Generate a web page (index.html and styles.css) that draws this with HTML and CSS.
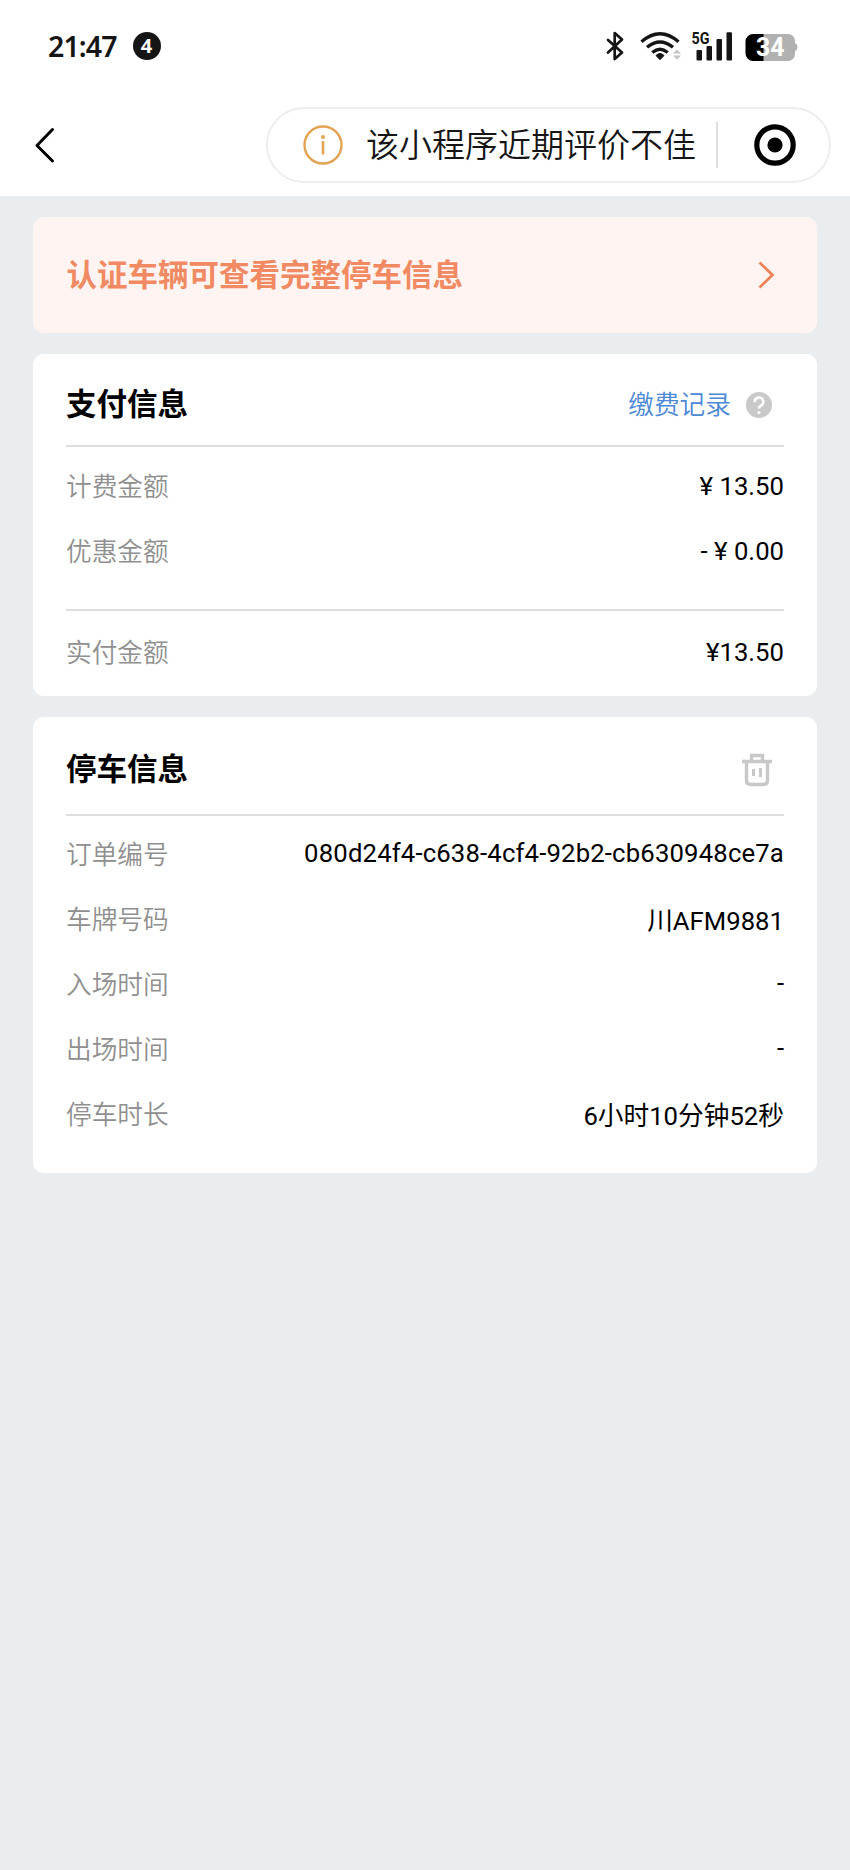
FILE: index.html
```
<!DOCTYPE html>
<html lang="zh-CN">
<head>
<meta charset="utf-8">
<title>停车信息</title>
<link rel="stylesheet" href="styles.css">
</head>
<body>
<header class="top">
  <div class="status">
    <div class="status-left"><span class="time">21:47</span><span class="count">4</span></div>
    <svg class="status-icons" width="200" height="40" viewBox="600 26 200 40">
      <path d="M608 40l14 12.500-7.300 6.500V33l7.300 6.500L608 52.500" fill="none" stroke="#151515" stroke-width="2.700" stroke-linejoin="round" stroke-linecap="round"/>
      <g fill="none" stroke="#151515" stroke-width="3.400">
        <path d="M641.500 41.800Q660 25.800 678.500 41.800"/>
        <path d="M647 47.300Q660 36.600 673 47.300"/>
        <path d="M652.300 52.500Q660 46.200 667.700 52.500"/>
      </g>
      <path d="M656 55.500Q660 51.500 664 55.500L660 59.700Z" fill="#151515" stroke="#151515" stroke-width="1"/>
      <path d="M673 53.500l4-4 4 4zM673 55.500l4 4 4-4z" fill="#c4c4c4"/>
      <text class="net" x="691.500" y="44" textLength="18" lengthAdjust="spacingAndGlyphs">5G</text>
      <g fill="#151515">
        <rect x="696.500" y="50" width="5.500" height="10.500" rx="1"/>
        <rect x="706.500" y="46" width="5.500" height="14.500" rx="1"/>
        <rect x="716.500" y="39" width="5.500" height="21.500" rx="1"/>
        <rect x="726.500" y="32.300" width="5.500" height="28.200" rx="1"/>
      </g>
      <path d="M753 34H788a7 7 0 0 1 7 7v2q2.500 1 2.500 4t-2.500 4v3a7 7 0 0 1-7 7H753z" fill="#b1b1b1"/>
      <path d="M763.500 34H753a7.500 7.500 0 0 0-7.500 7.500V53.500a7.500 7.500 0 0 0 7.500 7.500h10.500z" fill="#000"/>
      <text class="battery" x="756" y="56" textLength="28.500" lengthAdjust="spacingAndGlyphs">34</text>
    </svg>
  </div>
  <div class="nav">
    <svg class="back" width="24" height="40" viewBox="0 0 24 40"><path d="M19.500 4.500L4 20.500L19.500 36" fill="none" stroke="#000" stroke-width="3" stroke-linecap="round" stroke-linejoin="round"/></svg>
    <div class="capsule">
      <svg class="info" width="42" height="42" viewBox="0 0 42 42"><circle cx="21" cy="21" r="18.500" fill="none" stroke="#e2a352" stroke-width="2.400"/><path d="M21 17v13.500" stroke="#e2a352" stroke-width="2.600"/><circle cx="21" cy="13" r="2" fill="#e2a352"/></svg>
      <span class="notice">该小程序近期评价不佳</span>
      <span class="split"></span>
      <svg class="target" width="42" height="42" viewBox="0 0 42 42"><circle cx="21" cy="21" r="18.200" fill="none" stroke="#000" stroke-width="5.200"/><circle cx="21" cy="21" r="7.600"/></svg>
    </div>
  </div>
</header>
<main class="page">
  <section class="banner">
    <span>认证车辆可查看完整停车信息</span>
    <svg width="18" height="30" viewBox="0 0 18 30"><path d="M2.500 2.500L15.500 15L2.500 27.500" fill="none" stroke="#ed8258" stroke-width="2.800"/></svg>
  </section>
  <section class="card">
    <div class="head">
      <h2>支付信息</h2>
      <a class="record">缴费记录</a>
      <span class="help"><svg width="26" height="26" viewBox="0 0 26 26"><circle cx="13" cy="13" r="13" fill="#c9c9c9"/><path d="M8.700 10.200A4.300 4.300 0 1 1 14.700 13.800Q13 14.600 13 16.600" fill="none" stroke="#fff" stroke-width="2.600"/><circle cx="13" cy="20.500" r="1.600" fill="#fff"/></svg></span>
    </div>
    <dl class="rows">
      <div class="row"><dt>计费金额</dt><dd>¥ 13.50</dd></div>
      <div class="row"><dt>优惠金额</dt><dd>- ¥ 0.00</dd></div>
    </dl>
    <dl class="total">
      <div class="row"><dt>实付金额</dt><dd>¥13.50</dd></div>
    </dl>
  </section>
  <section class="card">
    <div class="head parking">
      <h2>停车信息</h2>
      <svg class="trash" width="32" height="34" viewBox="0 0 32 34"><g fill="none" stroke="#c8c8c8" stroke-width="3.400"><path d="M1 8.500H31M10.500 8.500V2.500H21.500V8.500M5.500 8.500V27.500Q5.500 31.500 9.500 31.500H22.500Q26.500 31.500 26.500 27.500V8.500"/><path d="M12.500 16v7M19.500 15v9" stroke-width="3"/></g></svg>
    </div>
    <dl class="rows details">
      <div class="row"><dt>订单编号</dt><dd class="order">080d24f4-c638-4cf4-92b2-cb630948ce7a</dd></div>
      <div class="row"><dt>车牌号码</dt><dd>川AFM9881</dd></div>
      <div class="row"><dt>入场时间</dt><dd>-</dd></div>
      <div class="row"><dt>出场时间</dt><dd>-</dd></div>
      <div class="row"><dt>停车时长</dt><dd>6小时10分钟52秒</dd></div>
    </dl>
  </section>
</main>
</body>
</html>
```

FILE: styles.css
```
* { box-sizing: border-box; }
body {
  margin: 0;
  min-height: 1870px;
  background: #e9edf0;
  color: #000;
  font-family: Roboto, "Noto Sans CJK SC", sans-serif;
  font-size: 25.7px;
}
svg { display: block; flex: none; }
h2, dl, dd { margin: 0; }
.top { height: 196px; background: #fff; }
.status {
  height: 92px;
  padding: 0 50px 0 48px;
  display: flex;
  justify-content: space-between;
  align-items: center;
}
.status-left { display: flex; align-items: center; gap: 16px; }
.time {
  font: 600 28.5px/40px "Noto Sans", sans-serif;
  letter-spacing: -0.9px;
  color: #151515;
}
.count {
  width: 28px;
  height: 28px;
  border-radius: 50%;
  background: #151515;
  color: #fff;
  font: 700 20px/28px "Noto Sans", sans-serif;
  text-align: center;
}
.net { font: 700 16px Roboto, sans-serif; fill: #151515; }
.battery { font: 700 25px Roboto, sans-serif; fill: #fff; }
.nav {
  height: 104px;
  padding: 0 19px 0 33px;
  display: flex;
  justify-content: space-between;
}
.back { margin-top: 33px; }
.capsule {
  width: 565px;
  height: 76px;
  margin-top: 15px;
  padding: 0 33px 0 34px;
  border: 2px solid #ededed;
  border-radius: 38px;
  display: flex;
  align-items: center;
}
.notice {
  margin-left: 22px;
  padding-top: 2px;
  font-size: 33px;
  font-weight: 350;
  line-height: 48px;
  white-space: nowrap;
  color: #151515;
}
.split { width: 2px; height: 46px; margin-left: 20px; background: #dedede; }
.target { margin-left: auto; }
.page { padding: 21px 33px; display: flex; flex-direction: column; gap: 21px; }
.banner {
  height: 116px;
  padding: 0 42px 0 33.5px;
  border-radius: 11px;
  background: #fff4f1;
  display: flex;
  align-items: center;
  justify-content: space-between;
  font-size: 30.5px;
  font-weight: 700;
  color: #f18a62;
}
.banner span { padding-bottom: 4px; }
.card { padding: 0 33px; border-radius: 11px; background: #fff; }
.head {
  height: 93px;
  padding-top: 10px;
  border-bottom: 2px solid #dedede;
  display: flex;
  align-items: center;
}
h2 { flex: 1; font-size: 30.5px; line-height: 44px; }
.record { color: #4d88d6; font-weight: 350; line-height: 38px; }
.help { margin: 0 12px 0 15px; }
.parking { height: 99px; padding-top: 9px; }
.trash { margin-right: 11px; }
.rows { height: 162px; padding-top: 6px; }
.row {
  height: 65px;
  display: flex;
  align-items: center;
  justify-content: space-between;
}
dt { padding-bottom: 3px; color: #8f8f8f; font-weight: 350; }
.order { letter-spacing: 0.16px; }
.total { height: 87px; border-top: 2px solid #dedede; padding-top: 8px; }
.details { height: 357px; padding-top: 5px; }
.details dd { padding-bottom: 1px; }
```
